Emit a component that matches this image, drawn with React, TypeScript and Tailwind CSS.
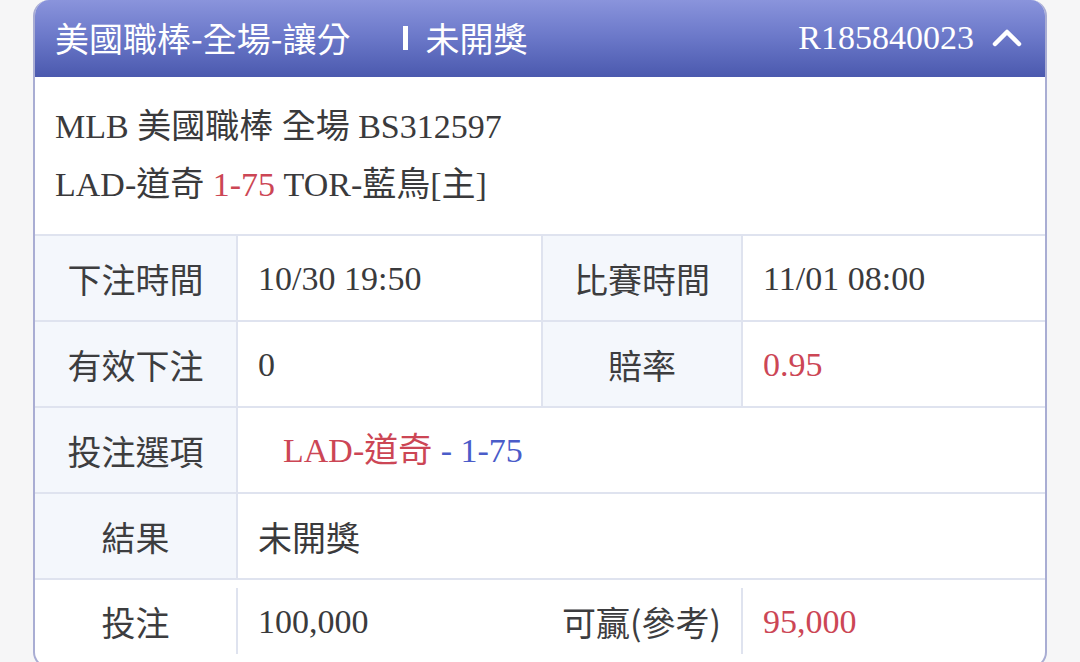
import React from "react";

const serif = "font-['Liberation_Serif','Noto_Sans_CJK_TC',serif]";
const sans = "font-['Noto_Sans_CJK_TC','Noto_Sans',sans-serif]";

type Cell = { label: string; value: React.ReactNode };

function LabelCell({ children, border = true }: { children: React.ReactNode; border?: boolean }) {
  return (
    <div
      className={`flex items-center justify-center text-[34px] text-[#3d3d3f] ${sans} ${
        border ? "bg-[#f4f7fc] border-r-2 border-[#dfe3ef]" : ""
      }`}
    >
      {children}
    </div>
  );
}

function ValueCell({ children, border = false }: { children: React.ReactNode; border?: boolean }) {
  return (
    <div
      className={`flex items-center pl-5 text-[34px] text-[#3a3a3c] ${serif} ${
        border ? "border-r-2 border-[#dfe3ef]" : ""
      }`}
    >
      {children}
    </div>
  );
}

function PairRow({ left, right }: { left: Cell; right: Cell }) {
  return (
    <div className="grid grid-cols-[203px_305px_200px_1fr] h-[86px] border-t-2 border-[#dfe3ef]">
      <LabelCell>{left.label}</LabelCell>
      <ValueCell border>{left.value}</ValueCell>
      <LabelCell>{right.label}</LabelCell>
      <ValueCell>{right.value}</ValueCell>
    </div>
  );
}

function WideRow({ label, children, indent = false }: { label: string; children: React.ReactNode; indent?: boolean }) {
  return (
    <div className="grid grid-cols-[203px_1fr] h-[86px] border-t-2 border-[#dfe3ef]">
      <LabelCell>{label}</LabelCell>
      <div className={`flex items-center ${indent ? "pl-[45px]" : "pl-5"} text-[34px] text-[#3a3a3c] ${serif}`}>
        {children}
      </div>
    </div>
  );
}

export default function App() {
  return (
    <div className="min-h-[662px] bg-[#f6f6f7] overflow-hidden">
      <div className="ml-[33px] w-[1014px] h-[668px] border-2 border-t-0 border-[#a9add3] rounded-[16px] overflow-hidden bg-white">
        {/* header */}
        <div className="h-[77px] flex items-center pl-5 pr-[23px] pb-[2px] bg-gradient-to-b from-[#8a94dc] via-[#6a77c8] to-[#4b59ae] text-white">
          <span className={`text-[34px] ${sans}`}>美國職棒-全場-讓分</span>
          <span className="ml-[52px] w-[5px] h-[24px] bg-white" />
          <span className={`ml-[18px] text-[34px] ${sans}`}>未開獎</span>
          <span className={`ml-auto text-[34px] ${serif}`}>R185840023</span>
          <svg className="ml-[18px]" width="30" height="20" viewBox="0 0 30 20" fill="none">
            <polyline
              points="3,16 15,4 27,16"
              stroke="white"
              strokeWidth="4.5"
              strokeLinecap="round"
              strokeLinejoin="round"
            />
          </svg>
        </div>

        {/* match info */}
        <div className={`pt-[21px] pb-[20px] pl-5 leading-[58px] text-[34px] text-[#3a3a3c] ${serif}`}>
          <div>MLB 美國職棒 全場 BS312597</div>
          <div>
            LAD-道奇 <span className="text-[#cc4655]">1-75</span> TOR-藍鳥[主]
          </div>
        </div>

        <PairRow
          left={{ label: "下注時間", value: "10/30 19:50" }}
          right={{ label: "比賽時間", value: "11/01 08:00" }}
        />
        <PairRow
          left={{ label: "有效下注", value: "0" }}
          right={{ label: "賠率", value: <span className="text-[#cc4655]">0.95</span> }}
        />
        <WideRow label="投注選項" indent>
          <span className="text-[#cc4655]">LAD-道奇</span>
          <span className="text-[#4a5cc9]">&nbsp;- 1-75</span>
        </WideRow>
        <WideRow label="結果">
          <span className={sans + " text-[34px]"}>未開獎</span>
        </WideRow>

        {/* stake row */}
        <div className="flex h-[84px] border-t-2 border-[#dfe3ef] items-center">
          <div className={`w-[201px] text-center text-[34px] text-[#3d3d3f] ${sans}`}>投注</div>
          <div className="w-[2px] h-[66px] bg-[#dfe3ef]" />
          <div className={`w-[303px] pl-5 text-[34px] text-[#3a3a3c] ${serif}`}>100,000</div>
          <div className={`w-[200px] pr-5 text-right text-[34px] text-[#3d3d3f] ${sans}`}>可贏(參考)</div>
          <div className="w-[2px] h-[66px] bg-[#dfe3ef]" />
          <div className={`flex-1 pl-5 text-[34px] text-[#cc4655] ${serif}`}>95,000</div>
        </div>
      </div>
    </div>
  );
}
